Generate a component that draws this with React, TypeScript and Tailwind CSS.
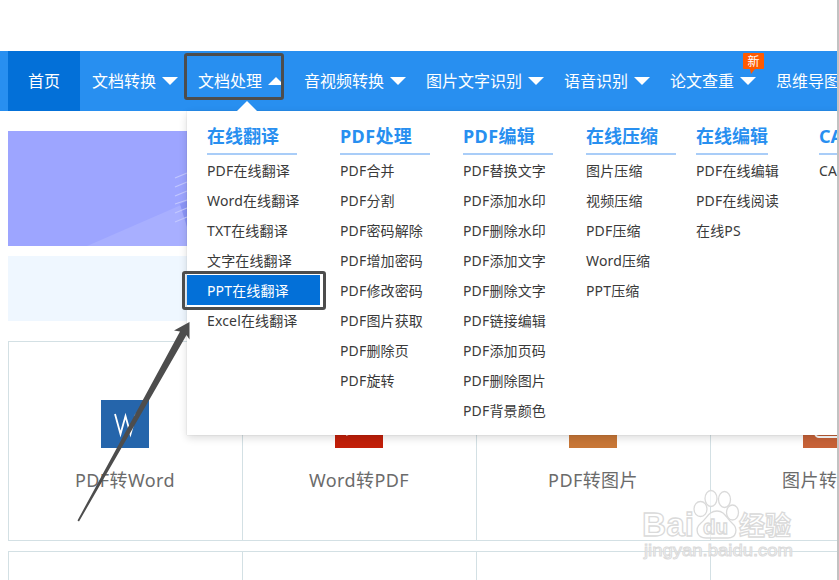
interface NavItem {
  label: string;
  open?: boolean;
  badge?: string;
}

interface MenuColumn {
  title: string;
  width: string;
  line: string;
  links: string[];
}

const navItems: NavItem[] = [
  { label: "文档转换" },
  { label: "文档处理", open: true },
  { label: "音视频转换" },
  { label: "图片文字识别" },
  { label: "语音识别" },
  { label: "论文查重", badge: "新" },
  { label: "思维导图" },
];

const columns: MenuColumn[] = [
  {
    title: "在线翻译",
    width: "w-[133px]",
    line: "w-[90px]",
    links: ["PDF在线翻译", "Word在线翻译", "TXT在线翻译", "文字在线翻译", "PPT在线翻译", "Excel在线翻译"],
  },
  {
    title: "PDF处理",
    width: "w-[123px]",
    line: "w-[90px] tracking-[0.4px]",
    links: ["PDF合并", "PDF分割", "PDF密码解除", "PDF增加密码", "PDF修改密码", "PDF图片获取", "PDF删除页", "PDF旋转"],
  },
  {
    title: "PDF编辑",
    width: "w-[123px]",
    line: "w-[90px] tracking-[0.4px]",
    links: [
      "PDF替换文字",
      "PDF添加水印",
      "PDF删除水印",
      "PDF添加文字",
      "PDF删除文字",
      "PDF链接编辑",
      "PDF添加页码",
      "PDF删除图片",
      "PDF背景颜色",
    ],
  },
  {
    title: "在线压缩",
    width: "w-[110px]",
    line: "w-[90px]",
    links: ["图片压缩", "视频压缩", "PDF压缩", "Word压缩", "PPT压缩"],
  },
  {
    title: "在线编辑",
    width: "w-[123px]",
    line: "w-[72px]",
    links: ["PDF在线编辑", "PDF在线阅读", "在线PS"],
  },
  { title: "CAD", width: "w-[123px]", line: "w-[90px]", links: ["CAD"] },
];

const tools = [
  { label: "PDF转Word", color: "bg-[#2565ab]", art: "M14 14l5.5 20L24.5 16l5 18L35 14" },
  { label: "Word转PDF", color: "bg-[#c21f09]", art: "M11 35l3-1 4-6" },
  { label: "PDF转图片", color: "bg-[#c87737]", art: "M12 12h24v20H12z" },
  { label: "图片转PDF", color: "bg-[#c76238]", art: "M12 34q1 3 4 3h24V12" },
];

function Caret({ up }: { up?: boolean }) {
  return (
    <svg width="16" height="8" viewBox="0 0 16 8" className="ml-1.5 shrink-0 fill-white">
      <path d={up ? "M0 8L8 0l8 8z" : "M0 0h16L8 8z"} />
    </svg>
  );
}

function NavBar() {
  return (
    <nav className="flex h-[60px] bg-[#288ff0] pl-2 text-base text-white">
      <a className="flex w-[72px] shrink-0 items-center justify-center bg-[#0370d8]">首页</a>
      <div className="flex gap-5 pl-3">
        {navItems.map((item) => (
          <a key={item.label} className="relative flex shrink-0 items-center whitespace-nowrap">
            {item.label}
            <Caret up={item.open} />
            {item.badge && (
              <span className="absolute top-[2px] left-[73px] h-4 w-[21px] rounded-[1px] bg-[#ff5a00] text-center text-xs leading-[17px]">
                {item.badge}
                <svg width="6" height="5" className="absolute top-4 left-[7px] fill-[#ff5a00]">
                  <path d="M0 0h5L1 5z" />
                </svg>
              </span>
            )}
          </a>
        ))}
      </div>
    </nav>
  );
}

function MegaMenu() {
  return (
    <div className="absolute top-[111px] left-[187px] flex h-[324px] w-[735px] bg-white shadow-[0_3px_8px_rgba(0,0,0,0.14),0_0_1px_rgba(0,0,0,0.2)]">
      <svg width="20" height="10" className="absolute -top-[10px] left-[50px] fill-white">
        <path d="M0 10L10 0l10 10z" />
      </svg>
      {columns.map((col) => (
        <div key={col.title} className={`${col.width} shrink-0 whitespace-nowrap`}>
          <div className={`${col.line} ml-5 h-11 border-b-2 border-[#a9cdf8] pt-[7px] text-lg leading-9 font-bold text-[#288ff0]`}>
            {col.title}
          </div>
          {col.links.map((link) => (
            <a
              key={link}
              className={`block h-[30px] pt-px pl-5 text-sm leading-[30px] tracking-[0.15px] ${
                link === "PPT在线翻译" ? "bg-[#0370d8] text-white" : "text-[#3a3a3a]"
              }`}
            >
              {link}
            </a>
          ))}
        </div>
      ))}
    </div>
  );
}

function Banner() {
  return (
    <svg width="829" height="115" className="block bg-[#9da5ff]">
      <path d="M79 115L180 71V115z" fill="#a8afff" />
      <path d="M172 73l7 23V70z" fill="#8c96f8" />
      <g stroke="#c3c8ff" strokeWidth="1.2">
        <path d="M167 47l12-5M167 56l12-5M167 65l12-5M167 73l12-4M167 82l12-5M167 91l12-5" />
      </g>
    </svg>
  );
}

function ToolGrid() {
  return (
    <div className="mt-5 ml-2 w-[937px]">
      <div className="flex h-[200px] border-y border-l border-[#d3e0e4]">
        {tools.map((tool) => (
          <div
            key={tool.label}
            className="flex w-[234px] shrink-0 flex-col items-center border-r border-[#d3e0e4] pt-[58px] pr-px"
          >
            <div className={`size-12 ${tool.color}`}>
              <svg width="48" height="48" fill="none" stroke="#fff" strokeWidth="1.8">
                <path d={tool.art} />
              </svg>
            </div>
            <div className="mt-[18px] text-lg tracking-[0.4px] text-[#6b6b6b]">{tool.label}</div>
          </div>
        ))}
      </div>
      <div className="mt-2.5 flex h-[60px] border-t border-l border-[#d3e0e4]">
        {tools.map((tool) => (
          <div key={tool.label} className="w-[234px] shrink-0 border-r border-[#d3e0e4]" />
        ))}
      </div>
    </div>
  );
}

function Watermark() {
  return (
    <svg
      width="170"
      height="90"
      className="absolute top-[485px] left-[636px]"
      fill="#fff"
      fillOpacity="0.65"
      stroke="#dadada"
      strokeWidth="1.3"
      fontFamily="'Liberation Sans','Noto Sans CJK SC',sans-serif"
      fontWeight="700"
    >
      <text x="6" y="51" fontSize="34" textLength="52" lengthAdjust="spacingAndGlyphs">Bai</text>
      <ellipse cx="64.5" cy="24" rx="6.5" ry="7.5" />
      <ellipse cx="75" cy="13.5" rx="6" ry="8" />
      <ellipse cx="88.5" cy="14.5" rx="6" ry="8" />
      <ellipse cx="96.5" cy="27.5" rx="6" ry="7.5" />
      <path d="M81 26c8 0 9 7 15 12 7 6 4 15-4 15H70c-9 0-12-9-5-15 6-5 8-12 16-12z" />
      <text x="67" y="49" fontSize="20" textLength="25" lengthAdjust="spacingAndGlyphs">du</text>
      <text x="103" y="50" fontSize="26" textLength="52">经验</text>
      <text x="8" y="71" fontSize="16" strokeWidth="0.9" fontWeight="400" textLength="149" lengthAdjust="spacingAndGlyphs">
        jingyan.baidu.com
      </text>
    </svg>
  );
}

export default function App() {
  return (
    <div className="relative h-[580px] w-[839px] overflow-hidden border-r-2 border-[#c2c2c2] bg-white pt-[51px] font-['Noto_Sans','Noto_Sans_CJK_SC',sans-serif]">
      <NavBar />
      <div className="mt-5 ml-2">
        <Banner />
        <div className="mt-2.5 h-[65px] bg-[#eff7ff]" />
      </div>
      <ToolGrid />
      <MegaMenu />

      {/* Step markers */}
      <div className="absolute top-[53px] left-[184px] h-[47px] w-[100px] rounded-[3px] border-3 border-[#4d4d4d]" />
      <div className="absolute top-[271px] left-[182px] h-[39px] w-36 rounded-[3px] border-3 border-[#4d4d4d]" />
      <svg width="120" height="210" className="absolute top-[315px] left-[72px] fill-[#4d4d4d]">
        <path d="M117.5 7L102 15.5l6 1L5.5 205.5l1.5 1L76 87 114.5 20l3 4.5z" />
      </svg>
      <Watermark />
    </div>
  );
}
